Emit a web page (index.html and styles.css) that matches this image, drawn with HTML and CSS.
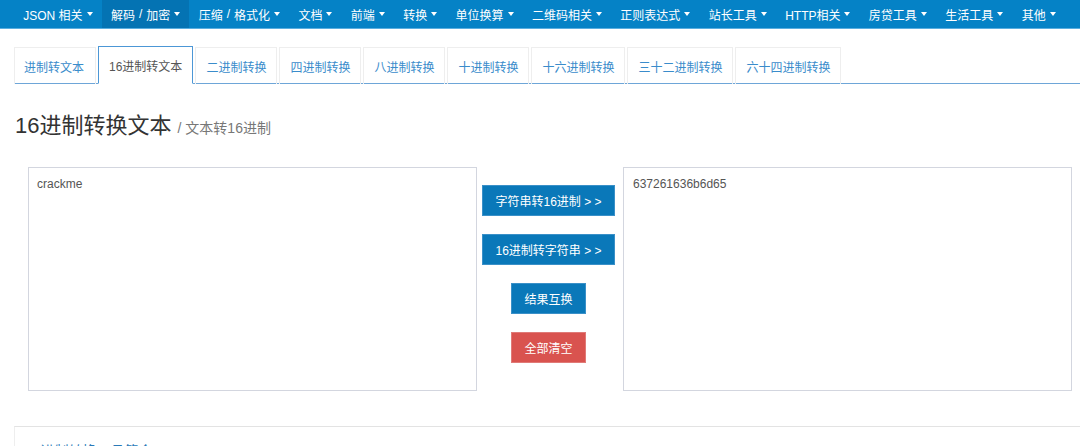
FILE: index.html
```html
<!DOCTYPE html>
<html lang="zh-CN">
<head>
<meta charset="utf-8">
<title>16进制转换文本</title>
<link rel="stylesheet" href="styles.css">
</head>
<body>
<nav class="navbar">
  <ul class="nav-list">
    <li class="nav-item">JSON 相关<span class="caret"></span></li>
    <li class="nav-item active">解码<span class="sep">/</span>加密<span class="caret"></span></li>
    <li class="nav-item">压缩<span class="sep">/</span>格式化<span class="caret"></span></li>
    <li class="nav-item">文档<span class="caret"></span></li>
    <li class="nav-item">前端<span class="caret"></span></li>
    <li class="nav-item">转换<span class="caret"></span></li>
    <li class="nav-item">单位换算<span class="caret"></span></li>
    <li class="nav-item">二维码相关<span class="caret"></span></li>
    <li class="nav-item">正则表达式<span class="caret"></span></li>
    <li class="nav-item">站长工具<span class="caret"></span></li>
    <li class="nav-item">HTTP相关<span class="caret"></span></li>
    <li class="nav-item">房贷工具<span class="caret"></span></li>
    <li class="nav-item">生活工具<span class="caret"></span></li>
    <li class="nav-item">其他<span class="caret"></span></li>
  </ul>
</nav>

<main class="container">
  <ul class="tabs">
    <li class="tab">进制转文本</li>
    <li class="tab active">16进制转文本</li>
    <li class="tab">二进制转换</li>
    <li class="tab">四进制转换</li>
    <li class="tab">八进制转换</li>
    <li class="tab">十进制转换</li>
    <li class="tab">十六进制转换</li>
    <li class="tab">三十二进制转换</li>
    <li class="tab">六十四进制转换</li>
  </ul>

  <h1 class="page-title">16进制转换文本 <small class="subtitle">/ 文本转16进制</small></h1>

  <section class="converter">
    <textarea class="box">crackme</textarea>
    <div class="actions">
      <button class="btn btn-primary">字符串转16进制 &gt; &gt;</button>
      <button class="btn btn-primary">16进制转字符串 &gt; &gt;</button>
      <button class="btn btn-primary">结果互换</button>
      <button class="btn btn-danger">全部清空</button>
    </div>
    <textarea class="box">637261636b6d65</textarea>
  </section>

  <section class="panel">
    <h2 class="panel-title">16进制转换工具简介</h2>
  </section>
</main>
</body>
</html>
```

FILE: styles.css
```css
* { box-sizing: border-box; }

html, body {
  margin: 0;
  padding: 0;
  background: #fff;
  overflow: hidden;
}

body {
  font-family: "Liberation Sans", Arial, "Noto Sans CJK SC", sans-serif;
  font-size: 12px;
  color: #333;
}

.navbar {
  height: 29px;
  background: #0582c6;
  border-bottom: 1px solid #5aaee0;
}

.nav-list {
  list-style: none;
  margin: 0;
  padding: 0 0 0 14px;
  display: flex;
  height: 28px;
}

.nav-item {
  display: flex;
  align-items: center;
  padding: 0 9.2px;
  color: #fff;
  font-size: 12px;
  white-space: nowrap;
}

.nav-item.active {
  background: #0473b3;
}

.sep {
  margin: 0 4px;
}

.caret {
  display: inline-block;
  width: 0;
  height: 0;
  margin-left: 4px;
  border-top: 4px solid #fff;
  border-left: 3.5px solid transparent;
  border-right: 3.5px solid transparent;
}

.container {
  padding-left: 14px;
}

.tabs {
  list-style: none;
  margin: 17px 0 0;
  padding: 0;
  display: flex;
  border-bottom: 1px solid #6ea6d8;
  height: 38px;
}

.tab {
  display: flex;
  align-items: center;
  height: 37px;
  margin-top: 1px;
  padding: 0 10px;
  margin-right: 2px;
  border: 1px solid #eee;
  border-bottom: none;
  color: #3a8ccb;
  font-size: 12px;
  white-space: nowrap;
}

.tab:first-child {
  padding: 0 11px 0 9px;
}

.tab.active {
  margin-top: 0;
  height: 38px;
  border: 1px solid #4c97d6;
  border-bottom: 1px solid #fff;
  margin-bottom: -1px;
  color: #555;
  background: #fff;
}

.page-title {
  margin: 29px 0 0 1px;
  font-size: 22px;
  font-weight: normal;
  line-height: 26px;
  color: #333;
}

.subtitle {
  font-size: 14px;
  color: #777;
}

.converter {
  display: flex;
  margin-top: 26px;
  padding-left: 14px;
}

.box {
  width: 449px;
  height: 224px;
  border: 1px solid #d3d6df;
  padding: 7px 9px;
  font-family: "Liberation Sans", Arial, "Noto Sans CJK SC", sans-serif;
  font-size: 12px;
  line-height: 18px;
  color: #555;
  resize: none;
  outline: none;
}

.box:first-child {
  padding-left: 8px;
}

.actions {
  width: 146px;
  display: flex;
  flex-direction: column;
  align-items: center;
  gap: 18px;
  padding-top: 18px;
  padding-right: 3px;
}

.btn {
  height: 31px;
  padding: 0 12px;
  font-family: "Liberation Sans", Arial, "Noto Sans CJK SC", sans-serif;
  font-size: 12px;
  color: #fff;
  border: 1px solid #3a90c8;
  border-radius: 0;
  cursor: pointer;
  white-space: nowrap;
}

.btn-primary {
  background: #0a78b9;
}

.btn-danger {
  background: #d9534f;
  border-color: #e07a77;
}

.panel {
  margin-top: 35px;
  border-top: 1px solid #e3e3e3;
  border-left: 1px solid #eee;
  padding: 13px 10px 0;
}

.panel-title {
  margin: 0;
  font-size: 14px;
  font-weight: normal;
  color: #2a7ab8;
}
```
